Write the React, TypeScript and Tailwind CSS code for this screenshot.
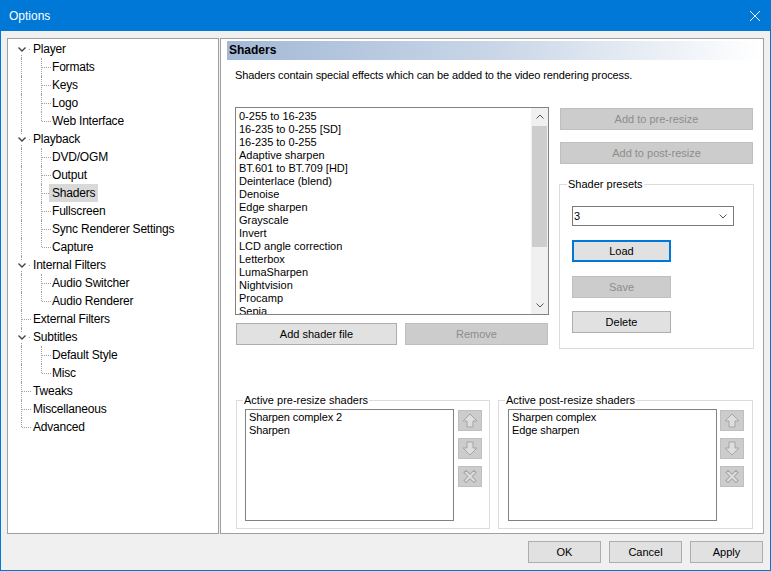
import React from "react";

type Node = { label: string; level: 0 | 1; expand?: boolean; last?: boolean; selected?: boolean };

const tree: Node[] = [
  { label: "Player", level: 0, expand: true },
  { label: "Formats", level: 1 },
  { label: "Keys", level: 1 },
  { label: "Logo", level: 1 },
  { label: "Web Interface", level: 1, last: true },
  { label: "Playback", level: 0, expand: true },
  { label: "DVD/OGM", level: 1 },
  { label: "Output", level: 1 },
  { label: "Shaders", level: 1, selected: true },
  { label: "Fullscreen", level: 1 },
  { label: "Sync Renderer Settings", level: 1 },
  { label: "Capture", level: 1, last: true },
  { label: "Internal Filters", level: 0, expand: true },
  { label: "Audio Switcher", level: 1 },
  { label: "Audio Renderer", level: 1, last: true },
  { label: "External Filters", level: 0 },
  { label: "Subtitles", level: 0, expand: true },
  { label: "Default Style", level: 1 },
  { label: "Misc", level: 1, last: true },
  { label: "Tweaks", level: 0 },
  { label: "Miscellaneous", level: 0 },
  { label: "Advanced", level: 0, last: true },
];

const shaders = [
  "0-255 to 16-235",
  "16-235 to 0-255 [SD]",
  "16-235 to 0-255",
  "Adaptive sharpen",
  "BT.601 to BT.709 [HD]",
  "Deinterlace (blend)",
  "Denoise",
  "Edge sharpen",
  "Grayscale",
  "Invert",
  "LCD angle correction",
  "Letterbox",
  "LumaSharpen",
  "Nightvision",
  "Procamp",
  "Sepia",
];

const Chevron = ({ up = false }: { up?: boolean }) => (
  <svg width="8" height="5" viewBox="0 0 8 5">
    <path d={up ? "M0.5 4.5L4 1L7.5 4.5" : "M0.5 0.5L4 4L7.5 0.5"} fill="none" stroke="#555" strokeWidth="1" />
  </svg>
);

const TreeRow = ({ n, i }: { n: Node; i: number }) => {
  const first = i === 0;
  return (
    <div className="relative h-[18px]">
      {/* root vertical line */}
      {n.level === 0 && first && <span className="absolute left-[13px] top-[12px] bottom-0 border-l border-dotted border-[#a0a0a0]" />}
      {n.level === 0 && !first && n.last && <span className="absolute left-[13px] top-0 h-[9px] border-l border-dotted border-[#a0a0a0]" />}
      {n.level === 0 && !first && !n.last && <span className="absolute left-[13px] top-0 bottom-0 border-l border-dotted border-[#a0a0a0]" />}
      {n.level === 1 && <span className="absolute left-[13px] top-0 bottom-0 border-l border-dotted border-[#a0a0a0]" />}
      {n.level === 1 && (
        <span className={`absolute left-[33px] top-0 border-l border-dotted border-[#a0a0a0] ${n.last ? "h-[9px]" : "bottom-0"}`} />
      )}
      {/* horizontal */}
      {n.level === 0 && !n.expand && <span className="absolute left-[14px] top-[9px] w-[9px] border-t border-dotted border-[#a0a0a0]" />}
      {n.level === 0 && n.expand && <span className="absolute left-[21px] top-[9px] w-[1px] border-t border-[#a0a0a0]" />}
      {n.level === 1 && <span className="absolute left-[34px] top-[9px] w-[9px] border-t border-dotted border-[#a0a0a0]" />}
      {n.expand && (
        <span className="absolute left-[8px] top-[5px] w-[11px] h-[9px] bg-white flex items-center justify-center">
          <svg width="8" height="5" viewBox="0 0 8 5">
            <path d="M0.5 0.5L4 4L7.5 0.5" fill="none" stroke="#404040" strokeWidth="1.3" />
          </svg>
        </span>
      )}
      <span
        className={`absolute top-0 h-[18px] leading-[18px] text-[12px] tracking-[-0.2px] text-black px-[3px] ${
          n.level === 0 ? "left-[22px]" : "left-[41px]"
        } ${n.selected ? "bg-[#d9d9d9]" : ""}`}
      >
        {n.label}
      </span>
    </div>
  );
};

const Btn = ({
  children,
  className = "",
  disabled = false,
  focus = false,
}: {
  children: React.ReactNode;
  className?: string;
  disabled?: boolean;
  focus?: boolean;
}) => (
  <div
    className={`h-[22px] flex items-center justify-center text-[11px] ${
      disabled
        ? "bg-[#cccccc] border border-[#bfbfbf] text-[#8d8d8d]"
        : focus
        ? "bg-[#e1e1e1] border-2 border-[#0078d7] text-black"
        : "bg-[#e1e1e1] border border-[#adadad] text-black"
    } ${className}`}
  >
    {children}
  </div>
);

const ArrowBtn = ({ kind }: { kind: "up" | "down" | "x" }) => (
  <div className="w-[24px] h-[21px] bg-[#cccccc] border border-[#bfbfbf] flex items-center justify-center">
    <svg width="22" height="19" viewBox="0 0 22 19">
      {kind === "up" && (
        <polygon points="11,3 18,10 14,10 14,16 8,16 8,10 4,10" fill="#dedede" stroke="#a5a5a5" strokeWidth="1" />
      )}
      {kind === "down" && (
        <polygon points="11,16 18,9 14,9 14,3 8,3 8,9 4,9" fill="#dedede" stroke="#a5a5a5" strokeWidth="1" />
      )}
      {kind === "x" && (
        <g transform="translate(11 9.5) rotate(45)">
          <polygon
            points="1.5,-7 1.5,-1.5 7,-1.5 7,1.5 1.5,1.5 1.5,7 -1.5,7 -1.5,1.5 -7,1.5 -7,-1.5 -1.5,-1.5 -1.5,-7"
            fill="#dedede"
            stroke="#a5a5a5"
            strokeWidth="1"
          />
        </g>
      )}
    </svg>
  </div>
);

const ActiveGroup = ({ title, items, width, listMl, btnMl }: { title: string; items: string[]; width: string; listMl: string; btnMl: string }) => (
  <fieldset className={`${width} h-[135px] border border-[#dcdcdc]`}>
    <legend className="ml-[6px] px-[1px] text-[11px] leading-[13px] text-black">{title}</legend>
    <div className="flex items-start mt-[2px]">
      <div className={`${listMl} w-[209px] h-[112px] border border-[#828282] bg-white pt-[1px] pl-[3px]`}>
        {items.map((s) => (
          <div key={s} className="text-[11px] leading-[13px] tracking-[-0.1px] text-black whitespace-nowrap">
            {s}
          </div>
        ))}
      </div>
      <div className={`${btnMl} mt-[1px] flex flex-col gap-[7px]`}>
        <ArrowBtn kind="up" />
        <ArrowBtn kind="down" />
        <ArrowBtn kind="x" />
      </div>
    </div>
  </fieldset>
);

export default function App() {
  return (
    <div className="w-[771px] h-[571px] bg-[#0078d7] flex flex-col font-['Liberation_Sans',Arial,sans-serif] overflow-hidden">
      {/* Title bar */}
      <div className="h-[31px] shrink-0 flex items-center justify-between pl-[9px] pr-[11px]">
        <span className="text-white text-[12px]">Options</span>
        <svg width="10" height="10" viewBox="0 0 10 10">
          <path d="M0 0L10 10M10 0L0 10" stroke="white" strokeWidth="1" />
        </svg>
      </div>

      {/* Body */}
      <div className="flex-1 mx-[1px] mb-[1px] bg-[#f0f0f0] px-[6px] pt-[7px] flex flex-col">
        <div className="flex h-[496px]">
          {/* Tree */}
          <div className="w-[212px] h-full border border-[#a0a0a0] bg-white pt-[1px]">
            {tree.map((n, i) => (
              <TreeRow key={n.label} n={n} i={i} />
            ))}
          </div>

          {/* Page */}
          <div className="ml-[1px] w-[544px] h-full border border-[#a0a0a0] bg-white flex flex-col">
            <div className="ml-[6px] mt-[2px] w-[533px] h-[19px] bg-linear-to-r from-[#a3b9d6] via-[#c9d6e7] to-white pl-[2px] text-[12px] font-bold leading-[19px] text-black">
              Shaders
            </div>
            <div className="ml-[14px] mt-[9px] text-[11px] leading-[13px] tracking-[-0.12px] text-black">
              Shaders contain special effects which can be added to the video rendering process.
            </div>

            <div className="flex items-start mt-[25px]">
              {/* shader list column */}
              <div className="ml-[14px] w-[314px]">
                <div className="h-[208px] border border-[#828282] flex">
                  <div className="flex-1 overflow-hidden pt-[2px] pl-[3px]">
                    {shaders.map((s) => (
                      <div key={s} className="text-[11px] leading-[13px] text-black whitespace-nowrap">
                        {s}
                      </div>
                    ))}
                  </div>
                  <div className="w-[17px] bg-[#f0f0f0] flex flex-col">
                    <div className="h-[17px] flex items-center justify-center">
                      <Chevron up />
                    </div>
                    <div className="flex-1 px-[1px]">
                      <div className="h-[121px] mt-[1px] bg-[#cdcdcd]" />
                    </div>
                    <div className="h-[17px] flex items-center justify-center">
                      <Chevron />
                    </div>
                  </div>
                </div>
                <div className="flex gap-[8px] mt-[8px] ml-[1px]">
                  <Btn className="w-[161px]">Add shader file</Btn>
                  <Btn className="w-[143px]" disabled>
                    Remove
                  </Btn>
                </div>
              </div>

              {/* right column */}
              <div className="ml-[10px] w-[195px] flex flex-col">
                <Btn className="ml-[1px] mt-[1px] w-[193px]" disabled>
                  Add to pre-resize
                </Btn>
                <Btn className="ml-[1px] mt-[12px] w-[193px]" disabled>
                  Add to post-resize
                </Btn>
                <fieldset className="mt-[14px] w-[195px] h-[171px] border border-[#dcdcdc]">
                  <legend className="ml-[7px] px-[1px] text-[11px] leading-[13px] text-black">Shader presets</legend>
                  <div className="ml-[12px] mt-[15px] flex flex-col">
                    <div className="w-[162px] h-[20px] border border-[#7a7a7a] bg-white flex items-center justify-between pl-[1px] pr-[6px] text-[11px] text-black">
                      <span>3</span>
                      <Chevron />
                    </div>
                    <Btn className="mt-[14px] w-[99px]" focus>
                      Load
                    </Btn>
                    <Btn className="mt-[14px] w-[99px]" disabled>
                      Save
                    </Btn>
                    <Btn className="mt-[13px] w-[99px]">Delete</Btn>
                  </div>
                </fieldset>
              </div>
            </div>

            {/* active shader groups */}
            <div className="flex gap-[8px] ml-[15px] mt-[45px]">
              <ActiveGroup
                title="Active pre-resize shaders"
                items={["Sharpen complex 2", "Sharpen"]}
                width="w-[254px]"
                listMl="ml-[8px]"
                btnMl="ml-[4px]"
              />
              <ActiveGroup
                title="Active post-resize shaders"
                items={["Sharpen complex", "Edge sharpen"]}
                width="w-[255px]"
                listMl="ml-[9px]"
                btnMl="ml-[3px]"
              />
            </div>
          </div>
        </div>

        {/* dialog buttons */}
        <div className="flex justify-end gap-[8px] mt-[7px] pr-[1px]">
          <Btn className="w-[73px]">OK</Btn>
          <Btn className="w-[73px]">Cancel</Btn>
          <Btn className="w-[73px]">Apply</Btn>
        </div>
      </div>
    </div>
  );
}
